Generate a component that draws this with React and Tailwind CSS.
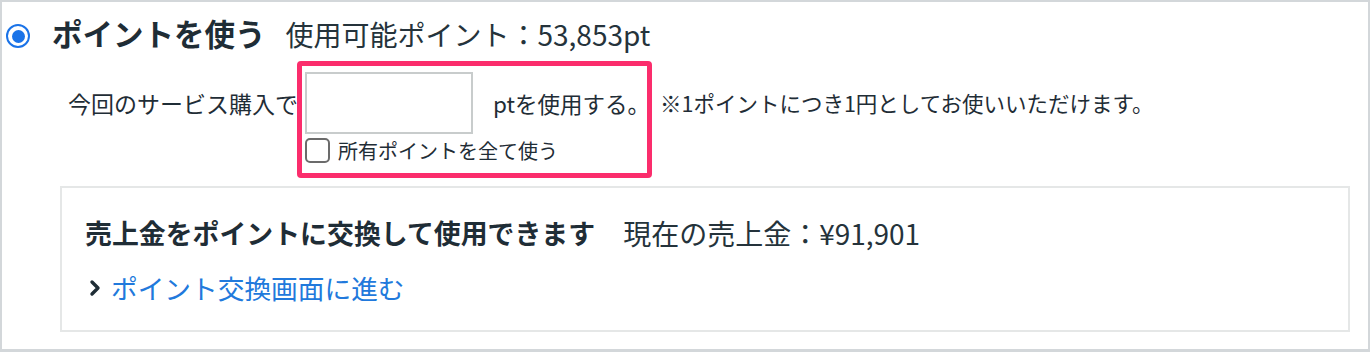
import React from "react";

export default function App() {
  const font = { fontFamily: '"Noto Sans CJK JP", "Noto Sans", sans-serif' };
  return (
    <div
      className="w-[1370px] h-[352px] bg-white border-2 border-b-[3px] border-[#d3d7da] text-[#1f2d36] overflow-hidden"
      style={font}
    >
      {/* Title row */}
      <div className="flex items-center h-[59px] pt-[4px]">
        <div className="ml-[4px] mt-[5px] w-6 h-6 rounded-full border-[2.5px] border-[#1a73e8] flex items-center justify-center shrink-0">
          <div className="w-[13px] h-[13px] rounded-full bg-[#1a73e8]" />
        </div>
        <span className="ml-[22px] text-[30.5px] font-bold leading-none">
          ポイントを使う
        </span>
        <span className="ml-[20px] text-[28px] leading-none text-[#25333b]">
          使用可能ポイント：53,853pt
        </span>
      </div>

      {/* Points row */}
      <div className="flex items-start">
        <div className="ml-[66px] mt-[11px] h-[62px] flex items-center text-[23px] leading-none whitespace-nowrap w-[229px]">
          今回のサービス購入で
        </div>
        <div className="border-[5px] border-[#fb2d6c] rounded-[4px] pt-[6px] pl-[3px] pr-[6px] pb-[10px] w-[355px]">
          <div className="flex items-center">
            <div className="w-[168px] h-[62px] border-2 border-[#c8cccc] bg-white shrink-0" />
            <span className="ml-[20px] text-[22.5px] leading-none whitespace-nowrap">
              ptを使用する。
            </span>
          </div>
          <div className="flex items-center mt-[4px]">
            <div className="w-[25px] h-[25px] border-2 border-[#6b6b6b] rounded-[5px] bg-white shrink-0" />
            <span className="ml-[8px] text-[20px] leading-none whitespace-nowrap">
              所有ポイントを全て使う
            </span>
          </div>
        </div>
        <div className="ml-[8px] mt-[11px] h-[62px] flex items-center text-[21.5px] leading-none whitespace-nowrap">
          ※1ポイントにつき1円としてお使いいただけます。
        </div>
      </div>

      {/* Sales box */}
      <div className="mt-[8px] ml-[58px] mr-[18px] h-[146px] border-2 border-[#e5e7e7] pt-[22px] pl-[23px]">
        <div className="flex items-center h-[46px] whitespace-nowrap">
          <span className="text-[26.9px] font-bold leading-none">
            売上金をポイントに交換して使用できます
          </span>
          <span className="ml-[28px] text-[28px] leading-none text-[#25333b]">
            現在の売上金：¥91,901
          </span>
        </div>
        <div className="flex items-center h-[64px]">
          <svg width="14" height="18" viewBox="0 0 14 18" className="ml-[3px] shrink-0">
            <path d="M4 3 L10 9 L4 15" fill="none" stroke="#1f2d36" strokeWidth="3.4" strokeLinecap="round" strokeLinejoin="round" />
          </svg>
          <span className="ml-[9px] text-[26.7px] leading-none text-[#2179dc] whitespace-nowrap">
            ポイント交換画面に進む
          </span>
        </div>
      </div>
    </div>
  );
}
